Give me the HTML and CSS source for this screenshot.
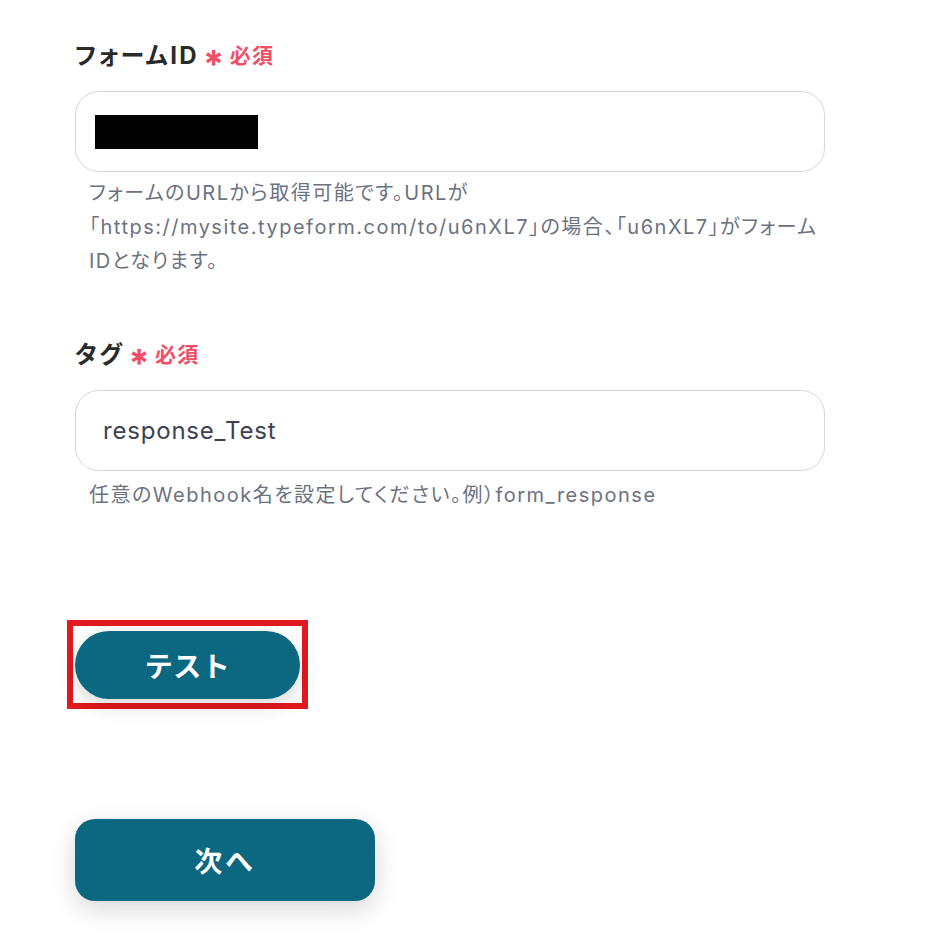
FILE: index.html
```html
<!DOCTYPE html>
<html lang="ja">
<head>
<meta charset="utf-8">
<link rel="stylesheet" href="styles.css">
</head>
<body>
<div class="page">
  <div class="field">
    <div class="label">フォームID<span class="req"><span class="ast">*</span>必須</span></div>
    <div class="input"><span class="redact"></span></div>
    <div class="help">フォームのURLから取得可能です。URLが<br>「https://mysite.typeform.com/to/u6nXL7」の場合、「u6nXL7」がフォーム<br>IDとなります。</div>
  </div>
  <div class="field field2">
    <div class="label">タグ<span class="req"><span class="ast">*</span>必須</span></div>
    <div class="input"><span class="value">response_Test</span></div>
    <div class="help help2">任意のWebhook名を設定してください。例）form_response</div>
  </div>
  <div class="test-wrap">
    <div class="frame"><button class="btn-test">テスト</button></div>
  </div>
  <button class="btn-next">次へ</button>
</div>
</body>
</html>
```
FILE: styles.css
```css
* { box-sizing: border-box; }
html, body { margin: 0; padding: 0; background: #fff; }
body {
  font-family: "Inter", "Noto Sans CJK JP", sans-serif;
  color: #222;
  letter-spacing: 0.05em;
  font-feature-settings: "palt";
}
.page {
  padding: 38px 0 45px 75px;
  width: 900px;
}
.field { width: 750px; }
.field2 { margin-top: 59px; }
.label {
  font-size: 24px;
  line-height: 36px;
  font-weight: 700;
  letter-spacing: 0.1em;
  color: #2a2a2a;
  display: flex;
  align-items: center;
}
.req {
  color: #f24e66;
  font-size: 21px;
  font-weight: 700;
  letter-spacing: 0.06em;
  margin-left: 4px;
  display: inline-flex;
  align-items: center;
}
.ast {
  font-size: 38px;
  line-height: 20px;
  margin-right: 4px;
  position: relative;
  top: 8px;
}
.input {
  margin-top: 17px;
  height: 81px;
  border: 1px solid #d3d7dd;
  border-radius: 24px;
  display: flex;
  align-items: center;
  padding-left: 19px;
}
.redact {
  display: block;
  width: 163px;
  height: 34px;
  background: #000;
}
.value {
  font-size: 24px;
  color: #3b4250;
  padding-left: 8px;
}
.help {
  margin-top: 4px;
  padding-left: 14px;
  font-size: 20px;
  line-height: 34px;
  letter-spacing: 0.075em;
  color: #6b7280;
  white-space: nowrap;
}
.help2 { margin-top: 7px; }
.test-wrap {
  margin-top: 108px;
  margin-left: -8px;
}
.frame {
  display: inline-block;
  border: 6px solid #e2191f;
  padding: 5px 2px 4px 2px;
}
.btn-test {
  display: block;
  width: 225px;
  height: 68px;
  border: none;
  border-radius: 34px;
  background: #0b6880;
  color: #fff;
  font-family: inherit;
  letter-spacing: 0.02em;
  font-size: 28px;
  font-weight: 700;
  box-shadow: 0 6px 20px rgba(0, 0, 0, 0.16);
}
.btn-next {
  display: block;
  margin-top: 110px;
  width: 300px;
  height: 82px;
  border: none;
  border-radius: 20px;
  background: #0b6880;
  color: #fff;
  font-family: inherit;
  letter-spacing: 0.1em;
  font-size: 28px;
  font-weight: 700;
  box-shadow: 0 8px 26px rgba(0, 0, 0, 0.16);
}
```
